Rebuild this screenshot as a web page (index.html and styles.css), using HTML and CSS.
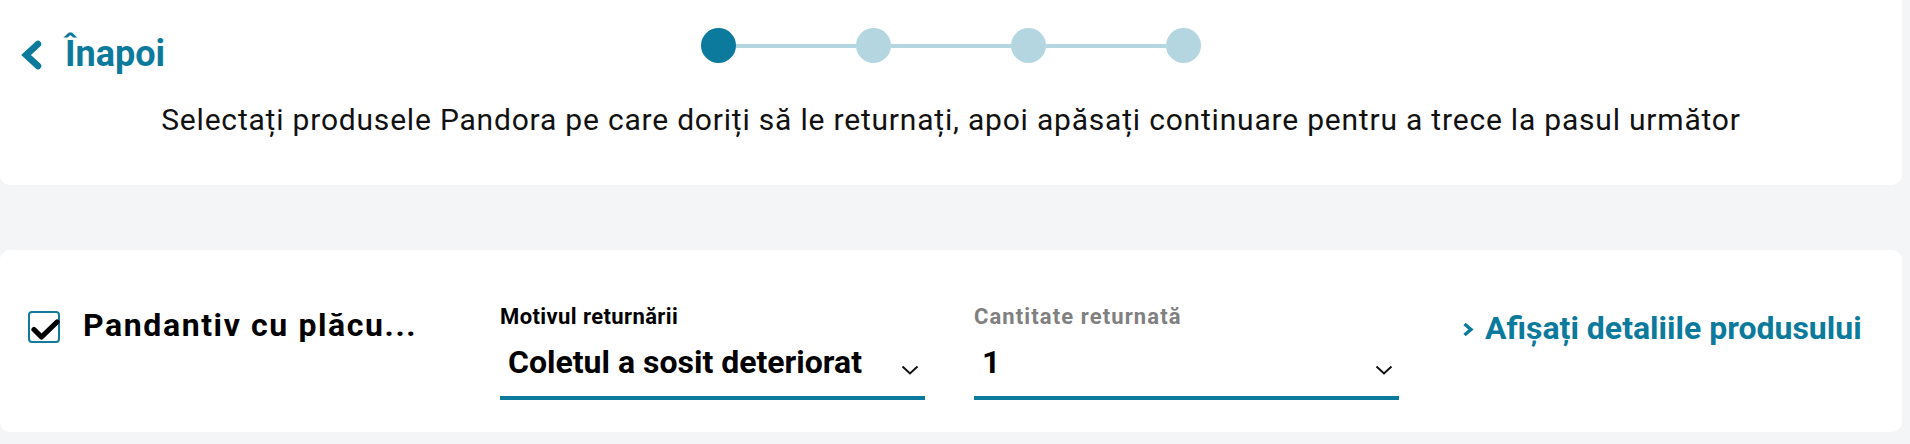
FILE: index.html
```html
<!DOCTYPE html>
<html lang="ro">
<head>
<meta charset="utf-8">
<title>Returnare produse</title>
<link rel="stylesheet" href="styles.css">
</head>
<body>
<div class="page">
  <section class="card intro">
    <div class="intro-head">
      <a class="back" href="#">
        <svg class="back-icon" width="24" height="30" viewBox="0 0 24 30" aria-hidden="true">
          <path d="M19 4 L7 15 L19 26" fill="none" stroke="currentColor" stroke-width="6.5" stroke-linejoin="miter" stroke-linecap="round"/>
        </svg>
        <span>Înapoi</span>
      </a>
      <ol class="steps">
        <li class="step is-current"></li>
        <li class="step-line"></li>
        <li class="step"></li>
        <li class="step-line"></li>
        <li class="step"></li>
        <li class="step-line"></li>
        <li class="step"></li>
      </ol>
      <div class="spacer"></div>
    </div>
    <p class="intro-text">Selectați produsele Pandora pe care doriți să le returnați, apoi apăsați continuare pentru a trece la pasul următor</p>
  </section>

  <section class="card item">
    <label class="item-product">
      <svg class="check" width="32" height="33" viewBox="0 0 32 33" aria-hidden="true">
        <rect x="1" y="1" width="30" height="30" rx="3" fill="#fff" stroke="#137a9b" stroke-width="2"/>
        <path d="M6 18.5 L13.5 26 L29 11" fill="none" stroke="#000" stroke-width="5.2" stroke-linecap="round" stroke-linejoin="round"/>
      </svg>
      <span class="item-name">Pandantiv cu plăcu...</span>
    </label>

    <div class="field">
      <div class="field-label">Motivul returnării</div>
      <div class="field-control">
        <span class="field-value">Coletul a sosit deteriorat</span>
        <svg class="caret" width="18" height="10" viewBox="0 0 18 10" aria-hidden="true">
          <path d="M1.5 1.5 L9 8.5 L16.5 1.5" fill="none" stroke="#111" stroke-width="2"/>
        </svg>
      </div>
    </div>

    <div class="field field-muted">
      <div class="field-label">Cantitate returnată</div>
      <div class="field-control">
        <span class="field-value">1</span>
        <svg class="caret" width="18" height="10" viewBox="0 0 18 10" aria-hidden="true">
          <path d="M1.5 1.5 L9 8.5 L16.5 1.5" fill="none" stroke="#111" stroke-width="2"/>
        </svg>
      </div>
    </div>

    <a class="details" href="#">
      <svg class="details-icon" width="12" height="15" viewBox="0 0 12 15" aria-hidden="true">
        <path d="M2.5 2 L9 7.5 L2.5 13" fill="none" stroke="currentColor" stroke-width="3.4"/>
      </svg>
      <span>Afișați detaliile produsului</span>
    </a>
  </section>
</div>
</body>
</html>
```

FILE: styles.css
```css
* {
  box-sizing: border-box;
}

html,
body {
  margin: 0;
  padding: 0;
}

body {
  background: #f4f5f6;
  font-family: Roboto, "Noto Sans", "Liberation Sans", sans-serif;
  color: #000;
}

.page {
  width: 1910px;
  height: 444px;
  padding-right: 8px;
  display: flex;
  flex-direction: column;
  gap: 65px;
}

.card {
  background: #fff;
  width: 100%;
}

/* Header card with the back link, progress steps and instructions */
.intro {
  height: 185px;
  border-radius: 0 0 10px 10px;
  padding-top: 28px;
}

.intro-head {
  display: grid;
  grid-template-columns: 1fr auto 1fr;
  align-items: start;
}

.back {
  display: flex;
  align-items: center;
  gap: 22px;
  margin-top: 4px;
  padding-left: 19px;
  color: #0c7a9c;
  font-weight: 700;
  font-size: 36px;
  line-height: 44px;
  text-decoration: none;
  justify-self: start;
}

.back-icon {
  display: block;
  margin-top: 2px;
}

.steps {
  list-style: none;
  margin: 0;
  padding: 0;
  display: flex;
  align-items: center;
}

.step {
  width: 35px;
  height: 35px;
  border-radius: 50%;
  background: #b3d6e0;
}

.step.is-current {
  background: #0c7a9c;
}

.step-line {
  width: 120px;
  height: 4px;
  background: #b3d6e0;
}

.intro-text {
  margin: 26px 0 0;
  text-align: center;
  font-size: 30px;
  line-height: 36px;
  font-weight: 400;
  letter-spacing: 0.8px;
  color: #111;
}

/* Returned item row */
.item {
  height: 182px;
  border-radius: 10px;
  padding: 54px 0 0 28px;
  display: flex;
  align-items: flex-start;
}

.item-product {
  flex: 0 0 472px;
  display: flex;
  align-items: center;
  gap: 23px;
  margin-top: 1px;
}

.check {
  display: block;
  margin-top: 5px;
}

.item-name {
  font-size: 32px;
  line-height: 40px;
  font-weight: 700;
  letter-spacing: 1.6px;
  white-space: nowrap;
}

.field {
  flex: 0 0 425px;
  display: flex;
  flex-direction: column;
}

.field + .field {
  margin-left: 49px;
}

.field-label {
  font-size: 22px;
  line-height: 26px;
  font-weight: 700;
  letter-spacing: 0.4px;
  color: #000;
}

.field-muted .field-label {
  color: #808080;
  letter-spacing: 1.1px;
}

.field-control {
  margin-top: 12px;
  display: flex;
  align-items: center;
  justify-content: space-between;
  padding: 0 6px 14px 8px;
  border-bottom: 4px solid #0c7a9c;
}

.field-value {
  font-size: 32px;
  line-height: 40px;
  font-weight: 700;
}

.caret {
  display: block;
  margin-top: 16px;
}

.details {
  margin-left: 63px;
  margin-top: 4px;
  display: flex;
  align-items: center;
  gap: 11px;
  color: #0c7a9c;
  font-size: 32px;
  line-height: 40px;
  font-weight: 700;
  text-decoration: none;
  white-space: nowrap;
}

.details-icon {
  display: block;
  margin-top: 2px;
}
```
